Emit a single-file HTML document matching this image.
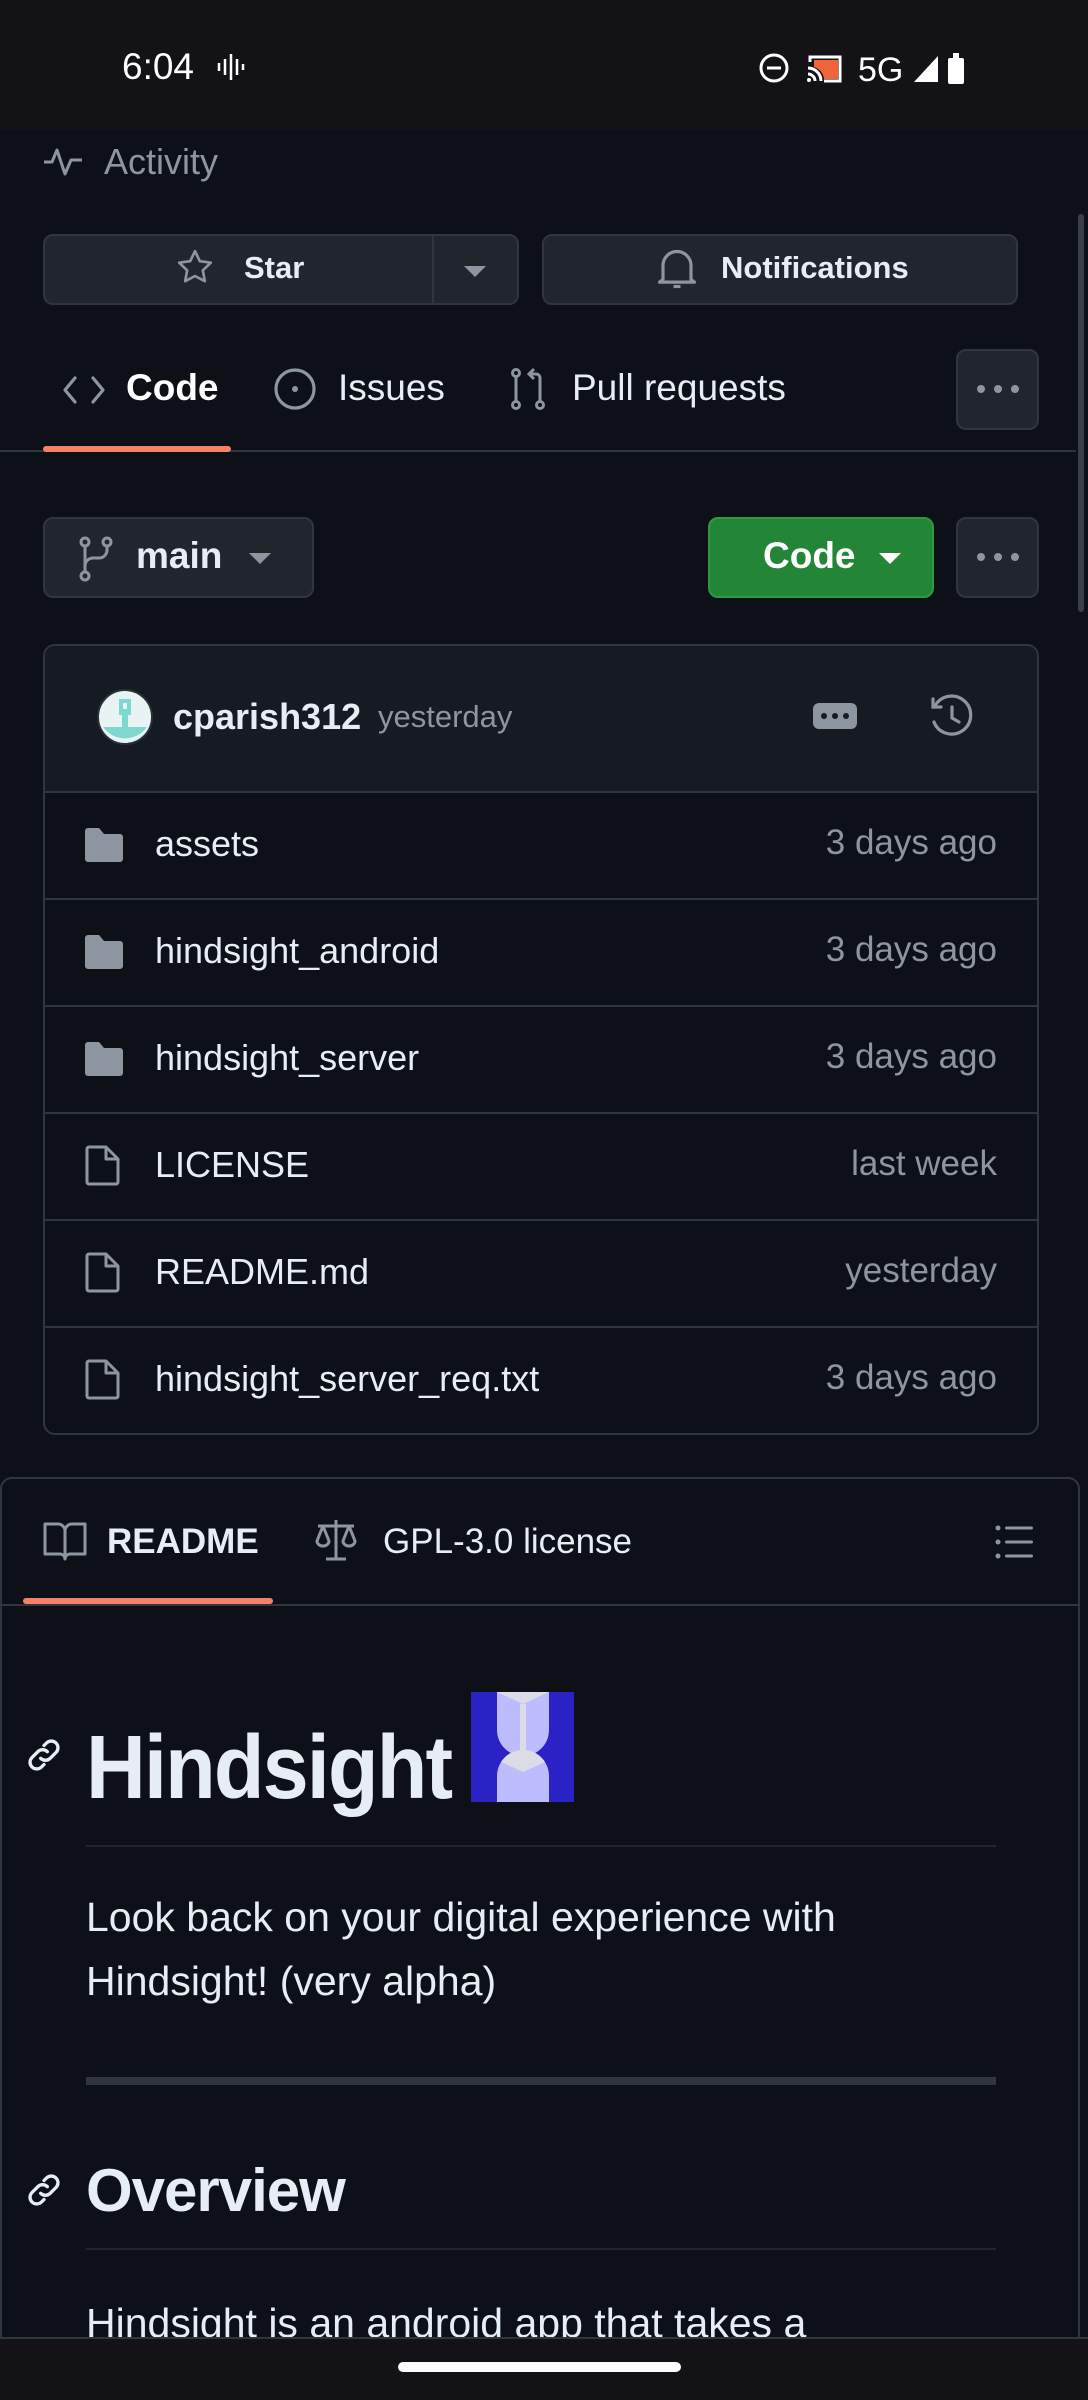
<!DOCTYPE html>
<html style="width:1088px;height:2400px;overflow:hidden"><head><meta charset="utf-8"><style>
*{margin:0;padding:0;box-sizing:border-box}
body{width:1088px;height:2400px;background:#0d1117;font-family:"Liberation Sans",sans-serif;color:#e6edf3;position:relative;overflow:hidden}
.a{position:absolute}
.btn{position:absolute;background:#21262d;border:2px solid #30363d;border-radius:10px}
.t{position:absolute;white-space:nowrap}
.row{position:absolute;left:43px;width:996px;height:107px;border-top:2px solid #30363d}
.row .n{position:absolute;left:112px;top:30px;font-size:36px;color:#e6edf3}
.row .d{position:absolute;right:42px;top:30px;font-size:35px;color:#8d96a0}
.row svg{position:absolute;left:40px;top:34px}
</style></head><body>
<!-- status bar -->
<div class="a" style="left:0;top:0;width:1088px;height:130px;background:#131317"></div>
<div class="t" style="left:122px;top:46px;font-size:37px;color:#fff">6:04</div>
<svg class="a" style="left:216px;top:52px" width="30" height="30" viewBox="0 0 30 30" stroke="#fff" stroke-width="2.5"><path d="M3 11v8M9 7v16M15 2v26M21 7v16M27 12v6"/></svg>
<svg class="a" style="left:758px;top:50px" width="220" height="36" viewBox="0 0 220 36">
<circle cx="16" cy="18" r="13" fill="none" stroke="#fff" stroke-width="3"/><rect x="9" y="16.5" width="14" height="3" fill="#fff"/>
<path d="M52 12V7h30v24H66" fill="none" stroke="#fff" stroke-width="3"/><path d="M56 10h24v19H66a14 14 0 00-10-12z" fill="#f0643a"/>
<path d="M50 18a13 13 0 0113 13M50 24a7 7 0 017 7" fill="none" stroke="#fff" stroke-width="3"/><circle cx="51" cy="30" r="2" fill="#fff"/>
<text x="100" y="31" font-size="34" fill="#fff" font-family="Liberation Sans">5G</text>
<path d="M156 32L180 6V32Z" fill="#fff"/>
<rect x="190" y="8" width="16" height="26" rx="2" fill="#fff"/><rect x="195" y="3" width="6" height="6" fill="#fff"/>
</svg>
<!-- scrollbar -->
<div class="a" style="left:1078px;top:214px;width:6px;height:398px;background:#3a3f46;border-radius:3px"></div>
<!-- Activity -->
<svg class="a" style="left:42px;top:146px" width="42" height="32" viewBox="0 0 42 32" fill="none" stroke="#8d96a0" stroke-width="3" stroke-linejoin="round"><path d="M2 16h8l5-12 8 24 6-14h11"/></svg>
<div class="t" style="left:104px;top:141px;font-size:36px;color:#8d96a0">Activity</div>
<!-- Star / Notifications -->
<div class="btn" style="left:43px;top:234px;width:476px;height:71px"></div>
<div class="a" style="left:432px;top:236px;width:2px;height:67px;background:#30363d"></div>
<svg class="a" style="left:175px;top:247px" width="40" height="40" viewBox="0 0 24 24" fill="none" stroke="#8d96a0" stroke-width="1.6" stroke-linejoin="round"><path d="M12 2.5l2.9 6 6.6.9-4.8 4.6 1.2 6.5L12 17.4l-5.9 3.1 1.2-6.5L2.5 9.4l6.6-.9z"/></svg>
<div class="t" style="left:244px;top:250px;font-size:31px;font-weight:bold;color:#e6edf3">Star</div>
<div class="a" style="left:464px;top:266px;border-left:11px solid transparent;border-right:11px solid transparent;border-top:11px solid #8d96a0"></div>
<div class="btn" style="left:542px;top:234px;width:476px;height:71px"></div>
<svg class="a" style="left:656px;top:246px" width="42" height="46" viewBox="0 0 24 26" fill="none" stroke="#8d96a0" stroke-width="1.8"><path d="M4 19V11a8 8 0 0116 0v8l2 1.5H2z" stroke-linejoin="round"/><path d="M10 23h4"/></svg>
<div class="t" style="left:721px;top:250px;font-size:31px;font-weight:bold;color:#e6edf3">Notifications</div>
<!-- tabs -->
<svg class="a" style="left:62px;top:370px" width="44" height="40" viewBox="0 0 44 40" fill="none" stroke="#8d96a0" stroke-width="3.2" stroke-linecap="round" stroke-linejoin="round"><path d="M13 8L3 20l10 12M31 8l10 12-10 12"/></svg>
<div class="t" style="left:126px;top:367px;font-size:37px;font-weight:bold;color:#fff">Code</div>
<svg class="a" style="left:273px;top:367px" width="44" height="44" viewBox="0 0 44 44" fill="none" stroke="#8d96a0" stroke-width="3.2"><circle cx="22" cy="22" r="19"/><circle cx="22" cy="22" r="3" fill="#8d96a0" stroke="none"/></svg>
<div class="t" style="left:338px;top:367px;font-size:37px;color:#e6edf3">Issues</div>
<svg class="a" style="left:510px;top:366px" width="38" height="46" viewBox="0 0 38 46" fill="none" stroke="#8d96a0" stroke-width="3"><circle cx="6" cy="7" r="3.5"/><circle cx="6" cy="39" r="3.5"/><circle cx="30" cy="39" r="3.5"/><path d="M6 11v24M30 35V12a4 4 0 00-4-4h-6M24 3l-5 5 5 5"/></svg>
<div class="t" style="left:572px;top:367px;font-size:37px;color:#e6edf3">Pull requests</div>
<div class="btn" style="left:956px;top:349px;width:83px;height:81px"></div>
<svg class="a" style="left:974px;top:382px" width="48" height="14"><circle cx="7" cy="7" r="4" fill="#8d96a0"/><circle cx="24" cy="7" r="4" fill="#8d96a0"/><circle cx="41" cy="7" r="4" fill="#8d96a0"/></svg>
<div class="a" style="left:0;top:450px;width:1076px;height:2px;background:#30363d"></div>
<div class="a" style="left:43px;top:446px;width:188px;height:6px;background:#f78166;border-radius:3px"></div>
<!-- branch row -->
<div class="btn" style="left:43px;top:517px;width:271px;height:81px"></div>
<svg class="a" style="left:76px;top:535px" width="40" height="48" viewBox="0 0 40 48" fill="none" stroke="#8d96a0" stroke-width="3"><circle cx="9" cy="7" r="4"/><circle cx="9" cy="41" r="4"/><circle cx="31" cy="7" r="4"/><path d="M9 11v26M31 11v4a8 8 0 01-8 8h-6a8 8 0 00-8 8"/></svg>
<div class="t" style="left:136px;top:535px;font-size:37px;font-weight:bold;color:#e6edf3">main</div>
<div class="a" style="left:249px;top:553px;border-left:11px solid transparent;border-right:11px solid transparent;border-top:11px solid #8d96a0"></div>
<div class="a" style="left:708px;top:517px;width:226px;height:81px;background:#238636;border-radius:10px;border:2px solid #2d9a43"></div>
<div class="t" style="left:763px;top:535px;font-size:37px;font-weight:bold;color:#fff">Code</div>
<div class="a" style="left:879px;top:553px;border-left:11px solid transparent;border-right:11px solid transparent;border-top:11px solid #fff"></div>
<div class="btn" style="left:956px;top:517px;width:83px;height:81px"></div>
<svg class="a" style="left:974px;top:550px" width="48" height="14"><circle cx="7" cy="7" r="4" fill="#8d96a0"/><circle cx="24" cy="7" r="4" fill="#8d96a0"/><circle cx="41" cy="7" r="4" fill="#8d96a0"/></svg>
<!-- file box -->
<div class="a" style="left:43px;top:644px;width:996px;height:791px;border:2px solid #30363d;border-radius:12px;overflow:hidden">
<div class="a" style="left:0;top:0;width:996px;height:147px;background:#161b22"></div>
</div>
<svg class="a" style="left:97px;top:689px" width="56" height="56" viewBox="0 0 56 56"><circle cx="28" cy="28" r="27" fill="#e8f4f4" stroke="#2a3038" stroke-width="2"/><rect x="22" y="10" width="12" height="16" fill="#7fd8d0"/><rect x="26" y="14" width="4" height="6" fill="#e8f4f4"/><rect x="25" y="26" width="6" height="12" fill="#7fd8d0"/><path d="M6 38h44a27 27 0 01-44 0z" fill="#7fd8d0"/></svg>
<div class="t" style="left:173px;top:696px;font-size:36px;font-weight:bold;color:#e6edf3">cparish312</div>
<div class="t" style="left:378px;top:699px;font-size:31px;color:#8d96a0">yesterday</div>
<svg class="a" style="left:812px;top:702px" width="46" height="28"><rect x="1" y="1" width="44" height="26" rx="6" fill="#8d96a0"/><circle cx="12" cy="14" r="3" fill="#161b22"/><circle cx="23" cy="14" r="3" fill="#161b22"/><circle cx="34" cy="14" r="3" fill="#161b22"/></svg>
<svg class="a" style="left:929px;top:694px" width="46" height="46" viewBox="0 0 46 46" fill="none" stroke="#8d96a0" stroke-width="3.2" stroke-linecap="round"><path d="M6 12A19 19 0 115 28"/><path d="M4 5v8h8"/><path d="M23 13v11l7 4"/></svg>
<div class="row" style="top:791px"><svg width="42" height="36" viewBox="0 0 42 36"><path d="M2 4a3 3 0 013-3h11l5 6h16a3 3 0 013 3v22a3 3 0 01-3 3H5a3 3 0 01-3-3z" fill="#8d96a0"/></svg><div class="n">assets</div><div class="d">3 days ago</div></div>
<div class="row" style="top:898px"><svg width="42" height="36" viewBox="0 0 42 36"><path d="M2 4a3 3 0 013-3h11l5 6h16a3 3 0 013 3v22a3 3 0 01-3 3H5a3 3 0 01-3-3z" fill="#8d96a0"/></svg><div class="n">hindsight_android</div><div class="d">3 days ago</div></div>
<div class="row" style="top:1005px"><svg width="42" height="36" viewBox="0 0 42 36"><path d="M2 4a3 3 0 013-3h11l5 6h16a3 3 0 013 3v22a3 3 0 01-3 3H5a3 3 0 01-3-3z" fill="#8d96a0"/></svg><div class="n">hindsight_server</div><div class="d">3 days ago</div></div>
<div class="row" style="top:1112px"><svg width="42" height="42" viewBox="0 0 42 42" style="top:30px"><path d="M6 3h17l12 12v23a2 2 0 01-2 2H6a2 2 0 01-2-2V5a2 2 0 012-2zM23 3v12h12" fill="none" stroke="#8d96a0" stroke-width="3" stroke-linejoin="round"/></svg><div class="n">LICENSE</div><div class="d">last week</div></div>
<div class="row" style="top:1219px"><svg width="42" height="42" viewBox="0 0 42 42" style="top:30px"><path d="M6 3h17l12 12v23a2 2 0 01-2 2H6a2 2 0 01-2-2V5a2 2 0 012-2zM23 3v12h12" fill="none" stroke="#8d96a0" stroke-width="3" stroke-linejoin="round"/></svg><div class="n">README.md</div><div class="d">yesterday</div></div>
<div class="row" style="top:1326px"><svg width="42" height="42" viewBox="0 0 42 42" style="top:30px"><path d="M6 3h17l12 12v23a2 2 0 01-2 2H6a2 2 0 01-2-2V5a2 2 0 012-2zM23 3v12h12" fill="none" stroke="#8d96a0" stroke-width="3" stroke-linejoin="round"/></svg><div class="n">hindsight_server_req.txt</div><div class="d">3 days ago</div></div>
<!-- readme box -->
<div class="a" style="left:0;top:1477px;width:1080px;height:923px;border:2px solid #30363d;border-bottom:none;border-radius:12px 12px 0 0"></div>
<svg class="a" style="left:43px;top:1521px" width="44" height="40" viewBox="0 0 44 40" fill="none" stroke="#8d96a0" stroke-width="3" stroke-linejoin="round"><path d="M2 3h13a7 7 0 017 7v28a5 5 0 00-5-5H2zM42 3H29a7 7 0 00-7 7v28a5 5 0 015-5h15z"/></svg>
<div class="t" style="left:107px;top:1522px;font-size:35px;font-weight:bold;color:#e6edf3">README</div>
<svg class="a" style="left:314px;top:1517px" width="44" height="46" viewBox="0 0 44 46" fill="none" stroke="#8d96a0" stroke-width="3" stroke-linejoin="round"><path d="M22 3v38M12 42h20M4 9h36M9 9l-6 15a6 5 0 0012 0zM35 9l-6 15a6 5 0 0012 0z"/></svg>
<div class="t" style="left:383px;top:1522px;font-size:35px;color:#e6edf3">GPL-3.0 license</div>
<svg class="a" style="left:995px;top:1524px" width="40" height="36" viewBox="0 0 40 36" fill="#8d96a0"><circle cx="3" cy="4" r="2.5"/><circle cx="3" cy="18" r="2.5"/><circle cx="3" cy="32" r="2.5"/><rect x="10" y="2.5" width="28" height="3" rx="1.5"/><rect x="10" y="16.5" width="28" height="3" rx="1.5"/><rect x="10" y="30.5" width="28" height="3" rx="1.5"/></svg>
<div class="a" style="left:2px;top:1604px;width:1076px;height:2px;background:#30363d"></div>
<div class="a" style="left:23px;top:1598px;width:250px;height:6px;background:#f78166;border-radius:3px"></div>
<!-- heading -->
<svg class="a" style="left:24px;top:1735px" width="40" height="40" viewBox="0 0 24 24" fill="none" stroke="#e6edf3" stroke-width="2" stroke-linecap="round"><path d="M10 14a4 4 0 005.7 0l3.5-3.5a4 4 0 00-5.7-5.7L12 6.3M14 10a4 4 0 00-5.7 0l-3.5 3.5a4 4 0 005.7 5.7l1.5-1.5"/></svg>
<div class="t" style="left:86px;top:1717px;font-size:90px;font-weight:bold;color:#e6edf3;letter-spacing:-2px;transform:scaleX(0.92);transform-origin:left">Hindsight</div>
<svg class="a" style="left:471px;top:1692px" width="103" height="110" viewBox="0 0 103 110"><rect width="103" height="110" fill="#2a22c4"/><path d="M26 0h52v38a26 26 0 01-26 26A26 26 0 0126 38z" fill="#bcbcff"/><path d="M26 0h52l-26 12z" fill="#dcdce6"/><path d="M49 12h6v52h-6z" fill="#dcdce6"/><path d="M26 110V84a26 26 0 0152 0v26z" fill="#bcbcff"/><path d="M30 70a26 26 0 0144 0l-22 10z" fill="#dcdce6"/></svg>
<div class="a" style="left:86px;top:1845px;width:910px;height:2px;background:#21262d"></div>
<div class="t" style="left:86px;top:1885px;font-size:41px;line-height:64px;color:#e6edf3;white-space:normal;width:920px">Look back on your digital experience with<br>Hindsight! (very alpha)</div>
<div class="a" style="left:86px;top:2077px;width:910px;height:8px;background:#30363d"></div>
<svg class="a" style="left:24px;top:2170px" width="40" height="40" viewBox="0 0 24 24" fill="none" stroke="#e6edf3" stroke-width="2" stroke-linecap="round"><path d="M10 14a4 4 0 005.7 0l3.5-3.5a4 4 0 00-5.7-5.7L12 6.3M14 10a4 4 0 00-5.7 0l-3.5 3.5a4 4 0 005.7 5.7l1.5-1.5"/></svg>
<div class="t" style="left:86px;top:2156px;font-size:60px;font-weight:bold;color:#e6edf3;letter-spacing:-1px">Overview</div>
<div class="a" style="left:86px;top:2248px;width:910px;height:2px;background:#21262d"></div>
<div class="t" style="left:86px;top:2300px;font-size:41px;color:#e6edf3">Hindsight is an android app that takes a</div>
<!-- nav bar -->
<div class="a" style="left:0;top:2337px;width:1088px;height:63px;background:#131317;border-top:2px solid #30363d"></div>
<div class="a" style="left:398px;top:2362px;width:283px;height:10px;background:#fff;border-radius:5px"></div>
</body></html>
